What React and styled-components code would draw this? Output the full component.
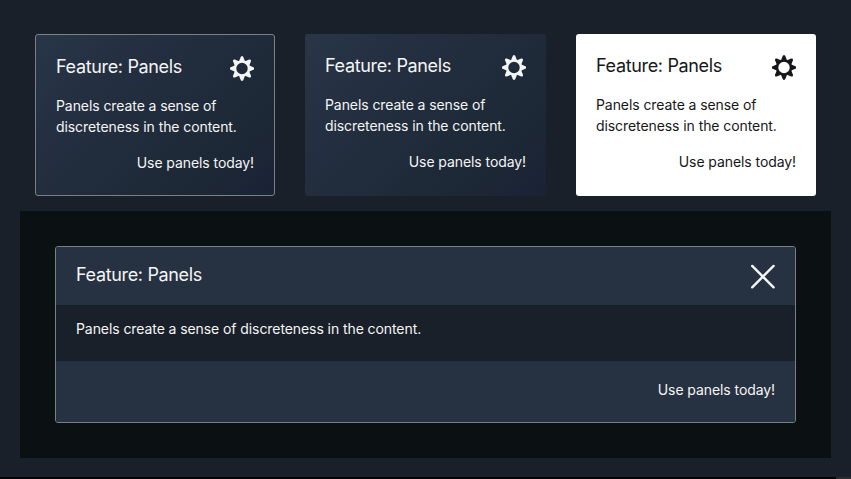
import React from "react";
import styled, { createGlobalStyle, css } from "styled-components";

const GlobalStyle = createGlobalStyle`
  * { box-sizing: border-box; }
  body {
    margin: 0;
    background: #19202a;
    font-family: Inter, "Liberation Sans", sans-serif;
  }
`;

const Page = styled.main`
  height: 479px;
  padding: 34px 20px 0;
  overflow: hidden;
  display: flex;
  flex-direction: column;
  background: #19202a;
`;

const CardRow = styled.section`
  display: grid;
  grid-template-columns: 240px 241px 240px;
  column-gap: 30px;
  height: 162px;
  margin: 0 15px 15px;
`;

const darkGradient = css`
  color: #f5f5f5;
  background: linear-gradient(135deg, #283648 0%, #222d3e 40%, #1d2836 78%, #1a2235 100%);
`;

const cardVariants = {
  outlined: css`
    ${darkGradient}
    border: 1px solid #7b8087;
    background-origin: border-box;
  `,
  plain: darkGradient,
  light: css`
    color: #15171a;
    background: #fff;
  `,
};

const Card = styled.article`
  display: flex;
  flex-direction: column;
  padding: 20px;
  border-radius: 3px;
  ${({ $variant }) => cardVariants[$variant]}
`;

const CardHeader = styled.header`
  display: flex;
  justify-content: space-between;
  height: 40px;
`;

const Title = styled.h2`
  margin: 0;
  font-size: 18px;
  font-weight: 400;
  line-height: 24px;
  letter-spacing: -0.34px;
  white-space: nowrap;
`;

const Text = styled.p`
  margin: 0;
  font-size: 14px;
  line-height: 21px;
  letter-spacing: -0.08px;
  white-space: nowrap;
`;

const CardFooter = styled.footer`
  display: flex;
  justify-content: flex-end;
  margin-top: 15px;
`;

const GearSvg = styled.svg`
  width: 24px;
  height: 25px;
  margin-top: 1px;
  flex: none;
`;

const Stage = styled.section`
  height: 247px;
  padding: 35px;
  background: #0b1013;
`;

const WidePanel = styled.article`
  display: flex;
  flex-direction: column;
  height: 177px;
  border: 1px solid #7b8087;
  border-radius: 3px;
  overflow: hidden;
  color: #f5f5f5;
  background: #19202a;
`;

const PanelHeader = styled.header`
  display: flex;
  justify-content: space-between;
  height: 58px;
  padding: 16px 20px 0;
  background: #263141;
`;

const PanelBody = styled.div`
  flex: 1;
  padding: 13px 20px 0;
  background: linear-gradient(#172028 0, #19202a 4px);
`;

const PanelFooter = styled.footer`
  display: flex;
  justify-content: flex-end;
  height: 61px;
  padding: 18px 20px 0;
  background: #263141;
`;

const CloseSvg = styled.svg`
  width: 25px;
  height: 27px;
  flex: none;
`;

const BottomEdge = styled.div`
  display: flex;
  justify-content: flex-end;
  height: 2px;
  margin: auto -20px 0;
  background: #030106;
`;

const EdgeCorner = styled.span`
  width: 15px;
  background: #2c2c2e;
`;

const GEAR_TEETH = [0, 45, 90, 135, 180, 225, 270, 315];

function Gear() {
  return (
    <GearSvg viewBox="-12 -12.5 24 25" fill="none" stroke="currentColor" aria-hidden="true">
      <circle r="6.8" strokeWidth="2.2" />
      {GEAR_TEETH.map((angle) => (
        <path
          key={angle}
          d="M-3.2-6.8L-1.3-11.4Q0-13.4 1.3-11.4L3.2-6.8Z"
          transform={`rotate(${angle})`}
          fill="currentColor"
          stroke="none"
        />
      ))}
    </GearSvg>
  );
}

function Close() {
  return (
    <CloseSvg viewBox="0 0 25 27" fill="none" stroke="currentColor" strokeWidth="2.4" strokeLinecap="round" aria-hidden="true">
      <path d="M2.2 2.9 23.6 24.3M23.6 2.9 2.2 24.3" />
    </CloseSvg>
  );
}

function FeatureCard({ variant }) {
  return (
    <Card $variant={variant}>
      <CardHeader>
        <Title>Feature: Panels</Title>
        <Gear />
      </CardHeader>
      <Text>
        Panels create a sense of
        <br />
        discreteness in the content.
      </Text>
      <CardFooter>
        <Text>Use panels today!</Text>
      </CardFooter>
    </Card>
  );
}

export default function App() {
  return (
    <>
      <GlobalStyle />
      <Page>
        <CardRow>
          <FeatureCard variant="outlined" />
          <FeatureCard variant="plain" />
          <FeatureCard variant="light" />
        </CardRow>
        <Stage>
          <WidePanel>
            <PanelHeader>
              <Title>Feature: Panels</Title>
              <Close />
            </PanelHeader>
            <PanelBody>
              <Text>Panels create a sense of discreteness in the content.</Text>
            </PanelBody>
            <PanelFooter>
              <Text>Use panels today!</Text>
            </PanelFooter>
          </WidePanel>
        </Stage>
        <BottomEdge>
          <EdgeCorner />
        </BottomEdge>
      </Page>
    </>
  );
}
